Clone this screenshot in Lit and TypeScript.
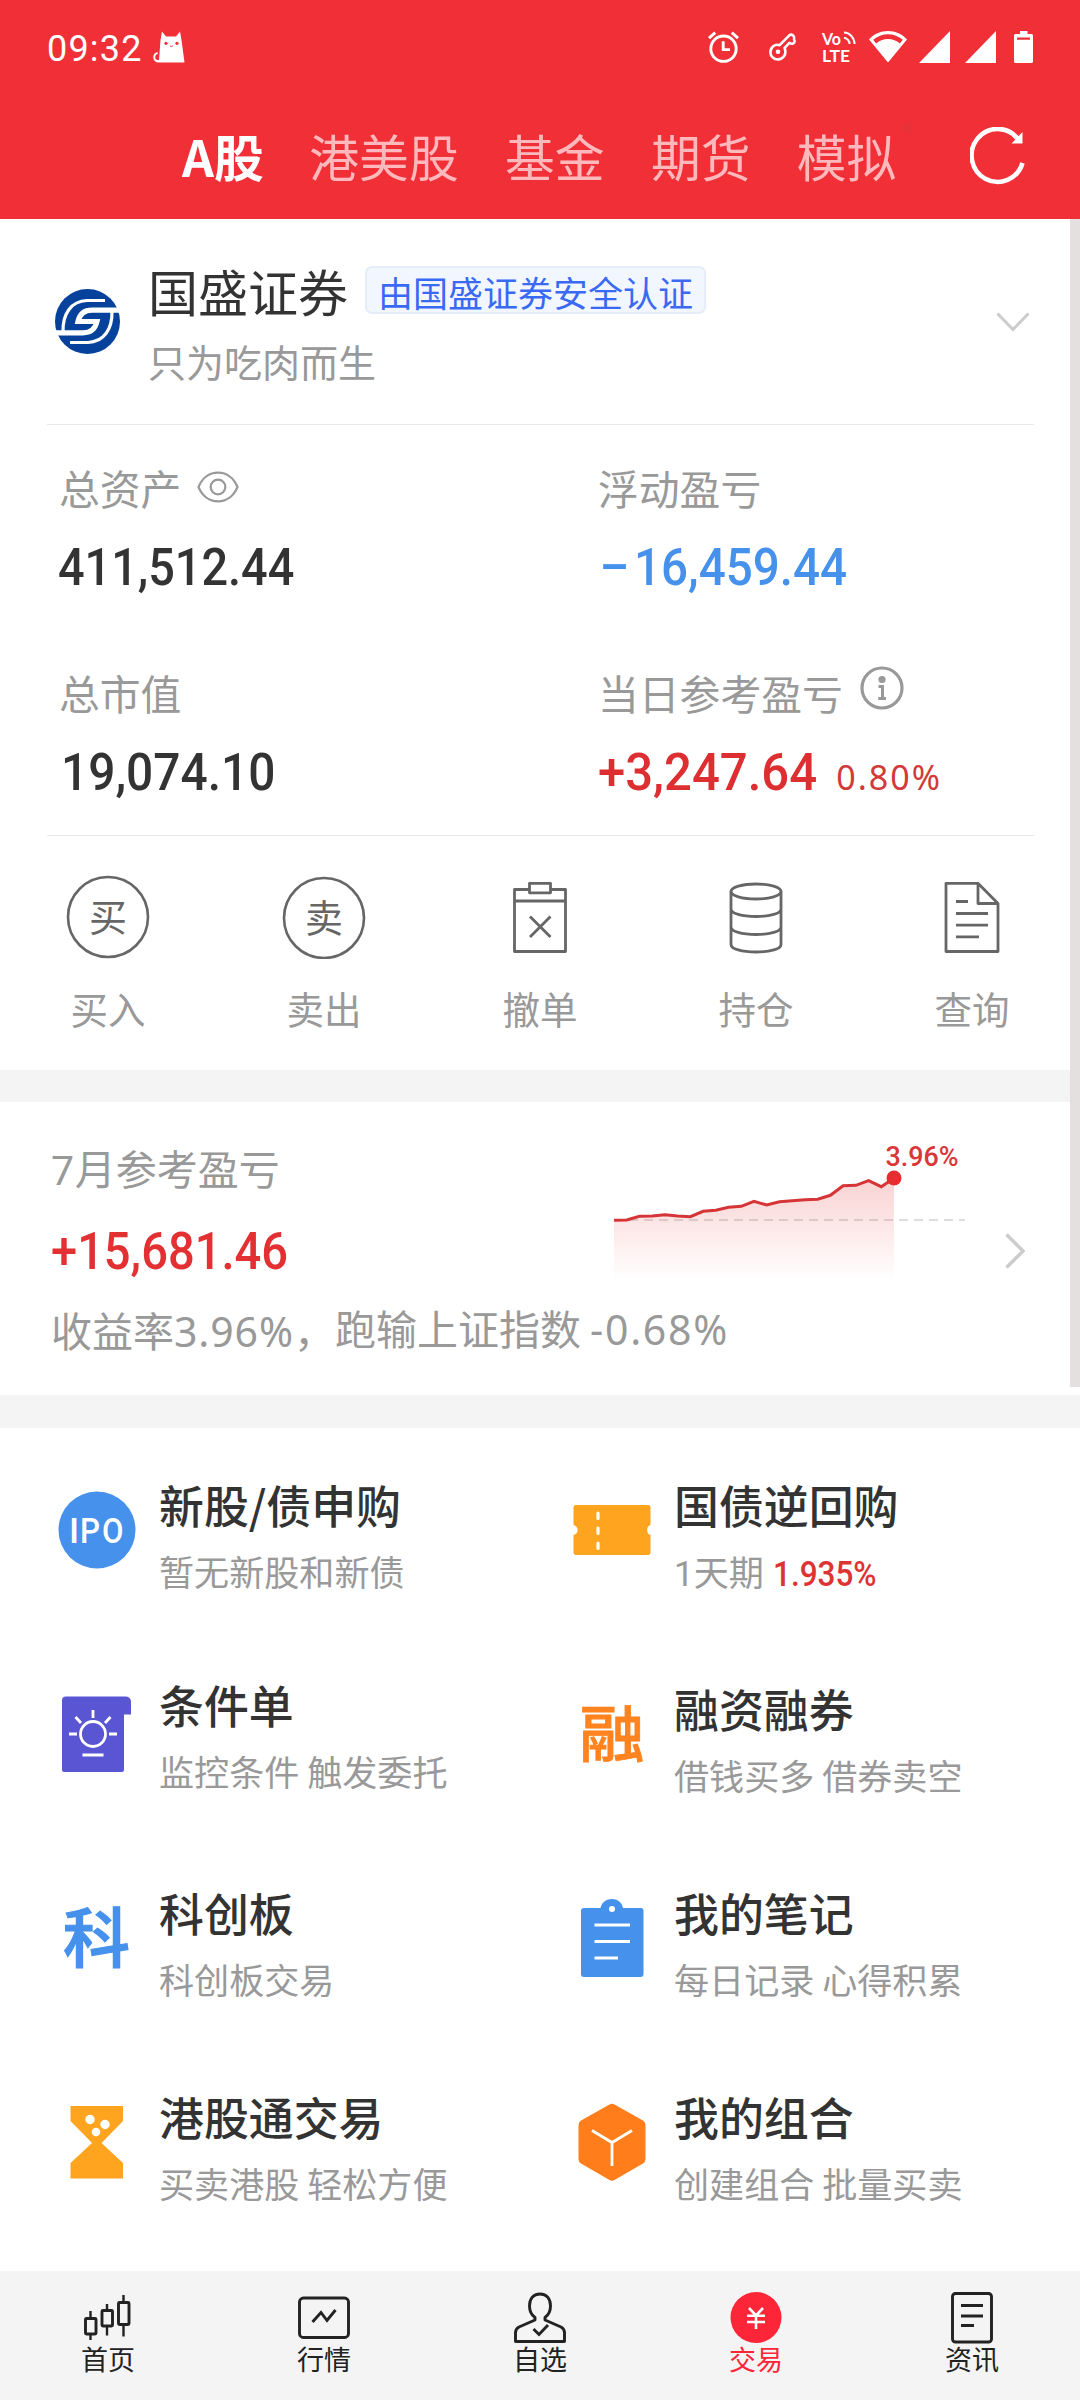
import { LitElement, html, svg, css } from "lit";
import { customElement } from "lit/decorators.js";

const BLUE = "#4591ec";

const strokeIcon = (w: number, h: number, body: unknown) =>
  html`<svg class="ic" width=${w} height=${h} viewBox="0 0 ${w} ${h}" fill="none">${body}</svg>`;

/* ---------- status bar ---------- */
@customElement("status-bar")
class StatusBar extends LitElement {
  static styles = css`
    :host { display: flex; height: 94px; align-items: center; padding: 0 47px; box-sizing: border-box; color: #fff; }
    .time { font: 400 36px/40px Roboto, sans-serif; letter-spacing: 1.2px; margin-top: 3px; }
    svg { display: block; flex: none; overflow: visible; }
    .cat { margin-left: 10px; }
    .icons { display: flex; align-items: center; margin-left: auto; }
    .key { margin-left: 30px; }
    .lte { margin-left: 26px; }
    .wifi { margin-left: 13px; }
    .s1 { margin-left: 12px; }
    .s2 { margin-left: 15px; }
    .bat { margin-left: 18px; }
    .t { font: 700 17px Lato, sans-serif; fill: #fff; }
  `;
  render() {
    return html`
      <span class="time">09:32</span>
      <svg class="cat" width="32" height="32" viewBox="0 0 32 32">
        <path d="M9 0.5 13 5.5H23L27 0.5 28.5 9 31.5 31.5H5C2 31.5 0 28.5 0.3 25.6 0.6 22.6 3 21 4.8 21.3L4.6 23C3 23.2 2 25 2.3 26.8 2.7 28.6 4 29.4 6 29L7.5 9Z" fill="#fff"/>
        <circle cx="13" cy="12.3" r="1.6" fill="#f12f37"/><circle cx="24" cy="12.3" r="1.6" fill="#f12f37"/>
        <path d="M17 14.8q1.4 1.6 2.8 0" stroke="#f12f37" fill="none"/>
      </svg>
      <div class="icons">
        <svg width="31" height="32" viewBox="0 0 31 32" fill="none" stroke="#fff" stroke-width="2.9">
          <circle cx="15.5" cy="17.7" r="12.7"/><path d="M15.2 10.2V18.6H22" /><path d="M1 7.2 7.2 1.6M30 7.2 23.8 1.6"/>
        </svg>
        <svg class="key" width="27" height="28" viewBox="0 0 27 28" fill="none" stroke="#fff" stroke-width="2.6" stroke-linejoin="round">
          <path d="M10.6 12.2 19.8 2.8C21.5 1.4 23.4 1.6 24.4 2.8 25.6 4.2 25.6 5.2 25 6.3 26.2 7.8 25.6 9.6 24.2 10.4 23 11 21.6 10.8 20.4 9.8L15.6 14.9C18 21 14.4 26.3 9 26.5 4.8 26.5 1.4 23.2 1.4 19.2 1.4 14.2 6 10.6 10.6 12.2Z"/>
          <circle cx="9" cy="18.8" r="1.6" fill="#fff" stroke-width="1.4"/>
        </svg>
        <svg class="lte" width="34" height="32" viewBox="0 0 34 32" fill="none">
          <text class="t" x="0" y="13.5" textLength="19" lengthAdjust="spacingAndGlyphs">Vo</text>
          <text class="t" x="0" y="31.3" textLength="28" lengthAdjust="spacingAndGlyphs">LTE</text>
          <path d="M22 1.6C28 1.6 32.5 7 32.6 13M22 6.8C25 7 27.6 10 27.6 13" stroke="#fff" stroke-width="2"/>
        </svg>
        <svg class="wifi" width="38" height="32" viewBox="0 0 38 32">
          <path fill-rule="evenodd" fill="#fff" d="M19 0C26.500 0 33 3 38 8.400L19 31.500 0 8.400C5 3 11.500 0 19 0ZM19 3.200C13.500 3.200 8.300 5.200 4.200 8.800L7.200 12.400C10.300 9.400 14.500 7.900 19 7.900 23.500 7.900 27.700 9.400 30.800 12.400L33.800 8.800C29.700 5.200 24.500 3.200 19 3.200Z"/>
        </svg>
        <svg class="s1" width="31" height="32" viewBox="0 0 31 32"><path d="M31 0V32H0Z" fill="#fff"/></svg>
        <svg class="s2" width="31" height="32" viewBox="0 0 31 32"><path d="M31 0V32H0Z" fill="#fff"/></svg>
        <svg class="bat" width="19" height="32" viewBox="0 0 19 32">
          <path fill-rule="evenodd" fill="#fff" d="M6 0H13.500V3H17.500Q19 3 19 4.500V30.500Q19 32 17.500 32H1.500Q0 32 0 30.500V4.500Q0 3 1.500 3H6ZM3 6.600V8.800H16V6.600Z"/>
        </svg>
      </div>`;
  }
}

/* ---------- market tabs ---------- */
@customElement("market-tabs")
class MarketTabs extends LitElement {
  static styles = css`
    :host { display: flex; height: 125px; align-items: center; box-sizing: border-box; padding-left: 182px; font: 400 49.8px/66px "Noto Sans CJK SC", sans-serif; color: #ffb9bc; }
    .row { display: flex; gap: 46.300px; padding-bottom: 4px; }
    .on { color: #fff; font-weight: 700; width: 81px; white-space: nowrap; }
    .dotted { position: relative; }
    .dot { position: absolute; right: -17px; top: 0; width: 12px; height: 12px; border-radius: 50%; background: #e93138; }
    svg { display: block; margin-left: 74px; margin-top: -1px; }
  `;
  render() {
    return html`
      <div class="row">
        <span class="on">A股</span><span>港美股</span><span>基金</span><span>期货</span>
        <span class="dotted">模拟<i class="dot"></i></span>
      </div>
      <svg width="58" height="58" viewBox="0 0 58 58" fill="none" stroke="#fff" stroke-width="4.6">
        <path d="M52.500 36A26 26.500 0 1 1 48 12"/>
        <path d="M52.500 5V16.500H41.500Z" fill="#fff" stroke="none"/>
      </svg>`;
  }
}

/* ---------- broker header ---------- */
@customElement("broker-head")
class BrokerHead extends LitElement {
  static styles = css`
    :host { display: flex; height: 205px; margin: 0 46px 0 47px; padding: 0 4px 0 8px; border-bottom: 1px solid #e9e9e9; align-items: center; font-family: "Noto Sans CJK SC", sans-serif; }
    svg { display: block; flex: none; }
    .text { flex: 1; align-self: flex-start; padding: 41px 0 0 28px; }
    .line { display: flex; align-items: center; gap: 17px; }
    .name { font-size: 50px; line-height: 60px; color: #333; }
    .badge { height: 48px; box-sizing: border-box; border: 2px solid #e6edfa; border-radius: 7px; background: #f2f7ff; color: #3a6af4; font-size: 35px; line-height: 46px; padding: 1px 11px 0; white-space: nowrap; }
    .sub { margin-top: 16px; font-size: 38px; line-height: 50px; color: #999; }
  `;
  render() {
    return html`
      <svg width="65" height="65" viewBox="0 0 65 65">
        <circle cx="32.500" cy="32.500" r="32.500" fill="#06419b"/>
        <g fill="none" stroke="#fff">
          <path d="M50 11.500H32C16 12 7.500 25 8 43" stroke-width="3.200"/>
          <path d="M15 53.500H33C49 53 57.500 40 57 22" stroke-width="3.200"/>
          <path d="M66 21.200H37C28 21.200 24.500 26 23 32.500H42C40.500 39 37 43.800 28 43.800H-1" stroke-width="5.200"/>
        </g>
      </svg>
      <div class="text">
        <div class="line"><span class="name">国盛证券</span><span class="badge">由国盛证券安全认证</span></div>
        <div class="sub">只为吃肉而生</div>
      </div>
      <svg width="34" height="20" viewBox="0 0 34 20" fill="none" stroke="#ccc" stroke-width="3"><path d="M1.500 1.500 17 17.500 32.500 1.500"/></svg>`;
  }
}

/* ---------- asset figures ---------- */
@customElement("asset-grid")
class AssetGrid extends LitElement {
  static styles = css`
    :host { display: grid; grid-template-columns: 539px 1fr; row-gap: 71px; margin: 0 46px 0 47px; padding: 38px 0 33px 12px; border-bottom: 1px solid #e9e9e9; color: #333; }
    .label { display: flex; align-items: center; font: 400 40.800px/50px "Noto Sans CJK SC", sans-serif; color: #999; height: 50px; }
    .label svg { display: block; }
    .eye { margin-left: 16px; margin-top: -2px; }
    .info { margin-left: 17px; margin-top: -10px; }
    .value { display: flex; align-items: baseline; margin-top: 25px; height: 59px; font: 500 52px/60px Roboto, sans-serif; }
    .num { display: inline-block; transform: scaleX(0.915); transform-origin: 0 50%; white-space: nowrap; }
    .narrow { transform: scaleX(0.9); margin-left: -1px; }
    .wide { transform: scaleX(0.943); }
    .sign { display: inline-block; letter-spacing: 9px; margin-left: 1px; transform: scaleX(1.150); transform-origin: 0 50%; }
    .shift { margin-left: 2px; transform: scaleX(0.920); }
    .down { color: #4591ec; }
    .up { color: #dd2f31; }
    .pct { font-family: "Noto Sans", sans-serif; font-size: 34px; font-weight: 400; letter-spacing: 2px; margin-left: 6px; color: #d23a3a; }
  `;
  render() {
    return html`
      <div>
        <div class="label">总资产
          <svg class="eye" width="42" height="32" viewBox="0 0 42 32" fill="none" stroke="#999" stroke-width="2.200">
            <path d="M1.500 16C5 7.500 12 1.700 21 1.700S37 7.500 40.500 16C37 24.500 30 30.300 21 30.300S5 24.500 1.500 16Z"/><circle cx="21" cy="16" r="7.300"/>
          </svg>
        </div>
        <div class="value"><span class="num narrow">411,512.44</span></div>
      </div>
      <div>
        <div class="label">浮动盈亏</div>
        <div class="value down"><span class="num"><span class="sign">−</span>16,459.44</span></div>
      </div>
      <div>
        <div class="label">总市值</div>
        <div class="value"><span class="num shift">19,074.10</span></div>
      </div>
      <div>
        <div class="label">当日参考盈亏
          <svg class="info" width="44" height="44" viewBox="0 0 44 44" fill="none" stroke="#999">
            <circle cx="22" cy="22" r="20" stroke-width="3.200"/><circle cx="22" cy="13.500" r="3.600" fill="#999" stroke="none"/>
            <path d="M18.500 20.500H22.500V32.500M18.200 32.500H26" stroke-width="3"/>
          </svg>
        </div>
        <div class="value up"><span class="num wide">+3,247.64</span><span class="pct">0.80%</span></div>
      </div>`;
  }
}

/* ---------- trade shortcuts ---------- */
@customElement("trade-actions")
class TradeActions extends LitElement {
  static styles = css`
    :host { display: grid; grid-template-columns: repeat(5, 1fr); height: 234px; box-sizing: border-box; padding-top: 39px; font-family: "Noto Sans CJK SC", sans-serif; }
    .cell { display: flex; flex-direction: column; align-items: center; }
    .ic { display: block; }
    .name { margin-top: 24px; font-size: 37.500px; line-height: 50px; color: #999; }
    .ch { font: 400 38px "Noto Sans CJK SC", sans-serif; fill: #666; text-anchor: middle; }
  `;
  private ring = (c: string, dy: number) =>
    svg`<circle cx="42" cy=${42 + dy} r="40" stroke="#666" stroke-width="2.600"/><text class="ch" x="42" y=${55.5 + dy}>${c}</text>`;
  private items: [string, unknown][] = [
    ["买入", this.ring("买", 0)],
    ["卖出", this.ring("卖", 1)],
    ["撤单", svg`<g stroke="#666" stroke-width="2.800" stroke-linejoin="round"><path d="M31.500 14.500H16.500V76.500H67.500V14.500H52.500M16.500 26H67.500"/><rect x="31.500" y="8.300" width="21" height="9.500"/><path d="M32 41.500 52.500 62M52.500 41.500 32 62"/></g>`],
    ["持仓", svg`<g stroke="#666" stroke-width="2.800"><ellipse cx="42" cy="16.500" rx="25" ry="7.500"/><path d="M17 16.500V69.500C17 74 28 77 42 77S67 74 67 69.500V16.500M17 34C17 38.500 28 41.500 42 41.500S67 38.500 67 34M17 52C17 56.500 28 59.500 42 59.500S67 56.500 67 52"/></g>`],
    ["查询", svg`<g stroke="#666" stroke-width="2.800" stroke-linejoin="round"><path d="M48 8.300H16V76.500H68V28.500ZM48 8.300V28.500H68"/><path d="M26 26.500H38M26 38.500H58M26 50.200H58M26 61.800H49"/></g>`],
  ];
  render() {
    return this.items.map(([n, i]) => html`<div class="cell">${strokeIcon(84, 84, i)}<span class="name">${n}</span></div>`);
  }
}

/* ---------- month result ---------- */
@customElement("month-card")
class MonthCard extends LitElement {
  static styles = css`
    :host { display: flex; align-items: center; height: 293px; box-sizing: border-box; padding: 0 55px 0 51px; background: #fff; border: 0; font: 400 41px/50px "Noto Sans CJK SC", sans-serif; color: #999; }
    .main { flex: 1; align-self: flex-start; }
    .top { display: flex; height: 178px; }
    .left { width: 553px; padding-top: 40px; }
    .chart { display: block; margin-top: 28px; }
    .sum { display: inline-block; margin-top: 26px; font: 500 52px/60px Roboto, sans-serif; color: #e23033; transform: scaleX(0.905); transform-origin: 0 50%; }
    .note { margin-top: 24px; white-space: nowrap; }
    .n { font-family: Roboto, sans-serif; letter-spacing: 0.800px; }
    .w { font-family: "Noto Sans", sans-serif; }
    .w1 { letter-spacing: 0.900px; }
    .w2 { letter-spacing: 1.700px; }
    .b { position: relative; top: -2px; }
    .lbl { font: 500 28.500px Roboto, sans-serif; fill: #d93738; }
    .go { display: block; margin-top: 4px; }
  `;
  private ys = [90.3, 90, 86.3, 86, 84.7, 86, 86.7, 81.3, 80.3, 77.3, 76.3, 71.3, 75, 71.7, 70.7, 69.7, 69.3, 65.3, 55.7, 55.3, 50.7, 56.7, 48];
  render() {
    const pts = this.ys.map((y, i) => `${(10 + i * 12.73).toFixed(1)},${y}`).join(" ");
    return html`
      <div class="main">
        <div class="top">
          <div class="left"><div><span class="n">7</span>月参考盈亏</div><span class="sum">+15,681.46</span></div>
          <svg class="chart" width="370" height="150" viewBox="0 0 370 150" fill="none">
            <defs><linearGradient id="g" x1="0" y1="48" x2="0" y2="150" gradientUnits="userSpaceOnUse"><stop offset="0" stop-color="#e63232" stop-opacity="0.220"/><stop offset="1" stop-color="#e63232" stop-opacity="0"/></linearGradient></defs>
            <path d="M10 90H361" stroke="#ddd" stroke-width="2" stroke-dasharray="9 6"/>
            <polygon points="10,150 ${pts} 290,150" fill="url(#g)"/>
            <polyline points=${pts} stroke="#d63537" stroke-width="3"/>
            <circle cx="290" cy="48" r="7.500" fill="#e62d30"/>
            <text class="lbl" x="281.500" y="36" textLength="73" lengthAdjust="spacingAndGlyphs">3.96%</text>
          </svg>
        </div>
        <div class="note">收益率<span class="w w1">3.96%</span>，<span class="b">跑输上证指数 <span class="w w2">-0.68%</span></span></div>
      </div>
      <svg class="go" width="20" height="36" viewBox="0 0 20 36" fill="none" stroke="#ccc" stroke-width="3.400"><path d="M1.500 1.500 18 18 1.500 34.500"/></svg>`;
  }
}

/* ---------- services ---------- */
@customElement("service-grid")
class ServiceGrid extends LitElement {
  static styles = css`
    :host { display: grid; grid-template-columns: 515px 1fr; grid-auto-rows: 204px; padding: 0 0 27px 58px; font-family: "Noto Sans CJK SC", sans-serif; }
    .cell { display: flex; gap: 23px; }
    .ic { display: block; align-self: center; flex: none; overflow: visible; }
    .text { padding-top: 47px; white-space: nowrap; }
    .raised { padding-top: 43px; }
    .name { font-size: 44.900px; line-height: 60px; font-weight: 500; color: #333; }
    .sub { margin-top: 11px; font-size: 35.100px; line-height: 50px; color: #999; }
    .one { font-family: Roboto, sans-serif; }
    .rate { display: inline-block; font: 500 35px/50px Roboto, sans-serif; color: #dd3335; transform: scaleX(0.900); transform-origin: 0 50%; margin-left: 1px; }
    .ipo { font: 500 35.500px Roboto, sans-serif; fill: #fff; }
    .rong { font: 500 65px "Noto Sans CJK SC", sans-serif; fill: #ff831f; stroke: #ff831f; stroke-width: 0.900px; }
    .ke { font: 500 67px "Noto Sans CJK SC", sans-serif; fill: #4591ec; stroke: #4591ec; stroke-width: 1.200px; }
  `;
  private items: [string, unknown, unknown, boolean?][] = [
    ["新股/债申购", "暂无新股和新债", svg`<circle cx="39" cy="39" r="38.500" fill=${BLUE}/><g class="ipo"><text x="11" y="52">I</text><text x="22" y="52" textLength="20" lengthAdjust="spacingAndGlyphs">P</text><text x="44" y="52" textLength="21.500" lengthAdjust="spacingAndGlyphs">O</text></g>`],
    ["国债逆回购", html`<span class="one">1</span>天期 <span class="rate">1.935%</span>`,
      svg`<path d="M3 14H75Q77.500 14 77.500 17V34C73 35 73 43 77.500 44V61Q77.500 64 75 64H3Q0.500 64 0.500 61V44C6 43 6 35 0.500 34V17Q0.500 14 3 14Z" fill="#ffa41f"/><path d="M25 22V27.500M25 37V42.500M25 52V57.500" stroke="#fff" stroke-width="3.200" stroke-linecap="round"/>`],
    ["条件单", "监控条件 触发委托",
      svg`<g transform="translate(0 -2)"><path d="M8 4.500H68Q73 5 73 10V22.500H66V78Q66 80 64 80H6Q4 80 4 78V8.500Q4 4.500 8 4.500Z" transform="translate(0 -1)" fill="#5955d3"/><g stroke="#fff" stroke-width="2.800"><circle cx="35" cy="41" r="12.500"/><path d="M35 17V25M17.500 24 23 30M52.500 24 47 30M11 41H19M51 41H59M24.500 62H45.500"/></g></g>`, true],
    ["融资融券", "借钱买多 借券卖空", svg`<text class="rong" transform="translate(6.500 61.500) scale(1 0.940)">融</text>`],
    ["科创板", "科创板交易", svg`<text class="ke" transform="translate(5 63) scale(1 0.960)">科</text>`],
    ["我的笔记", "每日记录 心得积累",
      svg`<path d="M11 9H27.500C30 -3 48 -3 50 9H67.500Q70.500 9 70.500 12V75Q70.500 78 67.500 78H11Q8 78 8 75V12Q8 9 11 9Z" fill=${BLUE}/><circle cx="39" cy="10" r="3" fill="#fff"/><path d="M21.500 26H57M21.500 42.500H57M21.500 59H45" stroke="#fff" stroke-width="2.800"/>`],
    ["港股通交易", "买卖港股 轻松方便",
      svg`<path d="M12.500 3H65V18L43.500 40 65 60V75.500H12.500V60L34 40 12.500 18Z" fill="#ffa41f"/><g fill="#fff"><circle cx="32" cy="16.500" r="4.700"/><circle cx="47" cy="21.500" r="4.700"/><circle cx="38" cy="29" r="4.300"/></g>`],
    ["我的组合", "创建组合 批量买卖",
      svg`<path d="M36.500 1.400Q39 0 41.500 1.400L70 17.500Q72.500 19 72.500 22V56Q72.500 59 70 60.500L41.500 77Q39 78.500 36.500 77L8 60.500Q5.500 59 5.500 56V22Q5.500 19 8 17.500Z" fill="#ff7e1b"/><path d="M19 27.500 39 39.500 59 27.500M39 39.500V63" stroke="#fff" stroke-width="2.800"/>`],
  ];
  render() {
    return this.items.map(([n, s, i, up]) => html`
      <div class="cell">${strokeIcon(78, 78, i)}
        <div class="text ${up ? "raised" : ""}"><div class="name">${n}</div><div class="sub">${s}</div></div>
      </div>`);
  }
}

/* ---------- bottom navigation ---------- */
@customElement("bottom-nav")
class BottomNav extends LitElement {
  static styles = css`
    :host { display: grid; grid-template-columns: repeat(5, 1fr); height: 129px; box-sizing: border-box; padding-top: 20px; background: #f4f4f4; font: 400 27px/34px "Noto Sans CJK SC", sans-serif; color: #222; }
    .cell { display: flex; flex-direction: column; align-items: center; }
    .ic { display: block; }
    .name { margin-top: -2px; }
    .on { color: #fd2638; }
  `;
  private items: [string, unknown][] = [
    ["首页", svg`<g transform="translate(1.500 0)"><path d="M7 20V27M7 43V49M23.500 13V19M23.500 35V44.500M40 4V11M40 34V45.500" stroke-width="2.400"/><rect x="2" y="27.500" width="10.500" height="15.500" rx="1"/><rect x="18.500" y="19.500" width="10.500" height="15.500" rx="1"/><rect x="35" y="11.500" width="10.500" height="22" rx="1"/></g>`],
    ["行情", svg`<rect x="1.500" y="7" width="49" height="39.500" rx="4"/><path d="M14.500 31 23 21.500 29 29.500 37.500 19" />`],
    ["自选", svg`<path d="M26 3C19 3 15.500 8 15.500 15 15.500 20 17.500 24 21 26.500V29L5 36Q1.500 38 1.500 41.500V50.500H50.500V41.500Q50.500 38 47 36L31 29V26.500C34.500 24 36.500 20 36.500 15 36.500 8 33 3 26 3Z" stroke-linejoin="round"/><path d="M19.500 38 25 43.500 34 34"/>`],
    ["交易", svg`<circle cx="26" cy="26.500" r="25.500" fill="#fd2638" stroke="none"/><path d="M19 17 26 24.500 33 17M26 24.500V38M17 24.700H35M17 31H35" stroke="#fff" stroke-width="2.600"/>`],
    ["资讯", svg`<rect x="6.500" y="2.500" width="39" height="48.500" rx="3"/><path d="M15 14.500H37M15 25H37M15 34.500H28"/>`],
  ];
  render() {
    return this.items.map(([n, i], k) => html`
      <div class="cell">${strokeIcon(52, 53, svg`<g stroke="#222" stroke-width="2.900">${i}</g>`)}<span class="name ${k === 3 ? "on" : ""}">${n}</span></div>`);
  }
}

@customElement("app-root")
class AppRoot extends LitElement {
  static styles = css`
    :host { display: block; position: relative; width: 1080px; height: 2400px; overflow: hidden; background: #fff; }
    .head { background: #f12f37; height: 219px; }
    .bar { background: #f4f4f4; }
    .a { height: 32px; }
    .b { height: 33px; }
    .scroll { position: absolute; right: 0; top: 219px; width: 10px; height: 1168px; background: #e4e0df; }
  `;
  render() {
    return html`
      <div class="head"><status-bar></status-bar><market-tabs></market-tabs></div>
      <broker-head></broker-head>
      <asset-grid></asset-grid>
      <trade-actions></trade-actions>
      <div class="bar a"></div>
      <month-card></month-card>
      <div class="bar b"></div>
      <service-grid></service-grid>
      <bottom-nav></bottom-nav>
      <div class="scroll"></div>`;
  }
}
